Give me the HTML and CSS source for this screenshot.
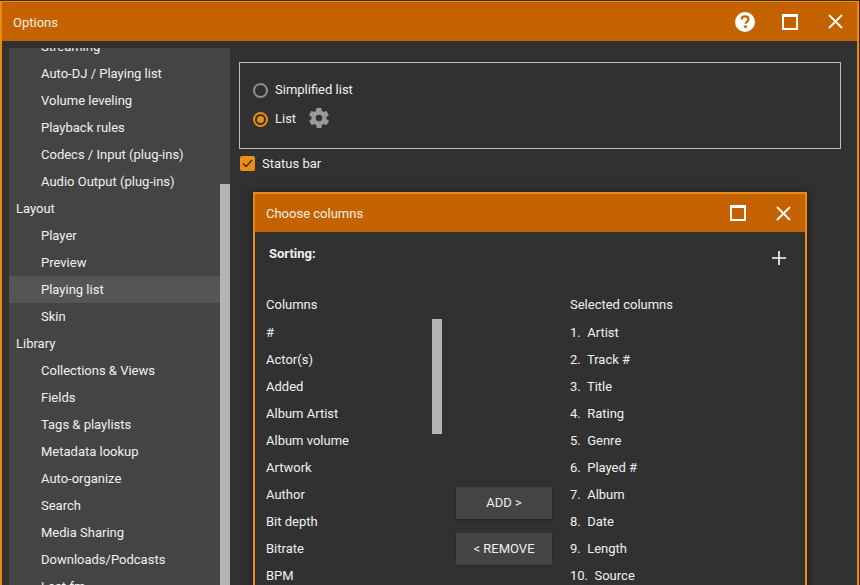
FILE: index.html
```html
<!DOCTYPE html>
<html lang="en">
<head>
<meta charset="utf-8">
<title>Options</title>
<link rel="stylesheet" href="styles.css">
</head>
<body>
<div class="window">
  <header class="titlebar">
    <span class="title">Options</span>
    <div class="win-buttons">
      <svg class="ic-help" width="22" height="22" viewBox="0 0 22 22"><circle cx="11" cy="11" r="10" fill="#fff"/><path d="M7.6 8.600c0-2 1.500-3.300 3.500-3.300s3.400 1.200 3.400 2.900c0 2.400-2.800 2.500-2.800 4.600" fill="none" stroke="#c46200" stroke-width="2.200"/><rect x="10.200" y="14.400" width="2.600" height="2.600" fill="#c46200"/></svg>
      <svg class="ic-max" width="16" height="16" viewBox="0 0 16 16"><rect x="1" y="1" width="14" height="14" fill="none" stroke="#fff" stroke-width="2"/><rect x="0" y="0" width="16" height="3" fill="#fff"/></svg>
      <svg class="ic-close" width="15" height="15" viewBox="0 0 15 15"><path d="M1 1l13 13M14 1L1 14" stroke="#fff" stroke-width="1.800" fill="none"/></svg>
    </div>
  </header>
  <div class="content">
    <nav class="sidebar">
      <div class="nav-scroll">
        <ul class="nav-list">
          <li class="sub">Streaming</li>
          <li class="sub">Auto-DJ / Playing list</li>
          <li class="sub">Volume leveling</li>
          <li class="sub">Playback rules</li>
          <li class="sub">Codecs / Input (plug-ins)</li>
          <li class="sub">Audio Output (plug-ins)</li>
          <li class="head">Layout</li>
          <li class="sub">Player</li>
          <li class="sub">Preview</li>
          <li class="sub active">Playing list</li>
          <li class="sub">Skin</li>
          <li class="head">Library</li>
          <li class="sub">Collections &amp; Views</li>
          <li class="sub">Fields</li>
          <li class="sub">Tags &amp; playlists</li>
          <li class="sub">Metadata lookup</li>
          <li class="sub">Auto-organize</li>
          <li class="sub">Search</li>
          <li class="sub">Media Sharing</li>
          <li class="sub">Downloads/Podcasts</li>
          <li class="sub">Last.fm</li>
        </ul>
      </div>
      <div class="nav-track"><div class="nav-thumb"></div></div>
    </nav>
    <main class="main">
      <section class="group">
        <label class="radio-row"><span class="radio"></span><span class="radio-label">Simplified list</span></label>
        <label class="radio-row"><span class="radio on"></span><span class="radio-label">List</span>
          <svg class="gear" width="24" height="24" viewBox="0 0 24 24"><path fill="#9a9a9a" fill-rule="evenodd" d="M19.400 13c.1-.3.1-.7.1-1s0-.7-.1-1l2.100-1.600c.2-.2.2-.4.1-.6l-2-3.500c-.1-.2-.4-.3-.6-.2l-2.500 1c-.5-.4-1.100-.7-1.700-1l-.4-2.600c0-.3-.2-.5-.5-.5h-4c-.3 0-.5.2-.5.5l-.4 2.600c-.6.3-1.200.6-1.700 1l-2.500-1c-.2-.1-.5 0-.6.2l-2 3.500c-.1.2-.1.4.1.6L4.600 11c-.1.3-.1.700-.1 1s0 .7.1 1l-2.100 1.600c-.2.2-.2.4-.1.6l2 3.500c.1.2.4.3.6.2l2.500-1c.5.4 1.100.7 1.700 1l.4 2.600c0 .3.2.5.5.5h4c.3 0 .5-.2.5-.5l.4-2.600c.6-.3 1.200-.6 1.700-1l2.500 1c.2.1.5 0 .6-.2l2-3.500c.1-.2.1-.4-.1-.6L19.400 13zM12 15.200a3.200 3.200 0 1 1 0-6.400 3.200 3.200 0 0 1 0 6.400z"/></svg>
        </label>
      </section>
      <label class="check-row">
        <span class="check"><svg width="11" height="9" viewBox="0 0 11 9"><path d="M1 4.500l3 3 6-6.500" fill="none" stroke="#2b2b2b" stroke-width="1.400"/></svg></span>Status bar
      </label>
      <section class="dialog">
        <header class="dialog-bar">
          <span class="dialog-title">Choose columns</span>
          <div class="dialog-buttons">
            <svg width="16" height="16" viewBox="0 0 16 16"><rect x="1" y="1" width="14" height="14" fill="none" stroke="#fff" stroke-width="2"/><rect x="0" y="0" width="16" height="3" fill="#fff"/></svg>
            <svg width="15" height="15" viewBox="0 0 15 15"><path d="M1 1l13 13M14 1L1 14" stroke="#fff" stroke-width="1.800" fill="none"/></svg>
          </div>
        </header>
        <div class="sorting">
          <strong>Sorting:</strong>
          <svg class="plus" width="14" height="14" viewBox="0 0 14 14"><path d="M7 0v14M0 7h14" stroke="#fff" stroke-width="1.600"/></svg>
        </div>
        <div class="columns">
          <div class="col col-left">
            <div class="col-head">Columns</div>
            <div class="col-list-wrap">
              <ul class="col-list">
                <li>#</li><li>Actor(s)</li><li>Added</li><li>Album Artist</li><li>Album volume</li><li>Artwork</li><li>Author</li><li>Bit depth</li><li>Bitrate</li><li>BPM</li>
              </ul>
              <div class="col-thumb"></div>
            </div>
          </div>
          <div class="col-actions">
            <button class="btn">ADD &gt;</button>
            <button class="btn">&lt; REMOVE</button>
          </div>
          <div class="col col-right">
            <div class="col-head">Selected columns</div>
            <ul class="col-list">
              <li>1.&nbsp; Artist</li><li>2.&nbsp; Track #</li><li>3.&nbsp; Title</li><li>4.&nbsp; Rating</li><li>5.&nbsp; Genre</li><li>6.&nbsp; Played #</li><li>7.&nbsp; Album</li><li>8.&nbsp; Date</li><li>9.&nbsp; Length</li><li>10.&nbsp; Source</li>
            </ul>
          </div>
        </div>
      </section>
    </main>
  </div>
</div>
</body>
</html>
```
FILE: styles.css
```css
* { box-sizing: border-box; }
html, body { margin: 0; padding: 0; height: 100%; overflow: hidden; }
body {
  background: #3a2d1c;
  font-family: Roboto, "Liberation Sans", sans-serif;
  font-size: 13px;
  color: #f0f0f0;
  padding-top: 1px;
}
ul { list-style: none; margin: 0; padding: 0; }

.window {
  width: 859px;
  height: 590px;
  overflow: hidden;
  border: 2px solid #e88a14;
  border-width: 1px 2px 0 2px;
  background: #313131;
  display: flex;
  flex-direction: column;
}
.titlebar {
  height: 39px;
  flex: none;
  background: #c46200;
  display: flex;
  align-items: center;
  justify-content: space-between;
  padding: 1px 0 0 11px;
}
.title { font-size: 13px; color: #f6eee4; }
.win-buttons { display: flex; align-items: center; margin: -1px 14px 0 0; }
.ic-help { margin-right: 26px; }
.ic-max { margin-right: 30px; }

.content { flex: 1; display: flex; min-height: 0; }

.sidebar {
  width: 221px;
  margin: 7px 0 0 7px;
  flex: none;
  background: #444;
  display: flex;
  height: 537px;
  overflow: hidden;
}
.nav-scroll { flex: 1; overflow: hidden; }
.nav-list { margin-top: -15px; }
.nav-list li { height: 27px; line-height: 27px; white-space: nowrap; color: #f0f0f0; }
.nav-list .sub { padding-left: 32px; }
.nav-list .head { padding-left: 7px; }
.nav-list .active { background: #555; }
.nav-track { width: 10px; flex: none; padding-top: 136px; }
.nav-thumb { height: 420px; background: #b5b5b5; }

.main { margin-left: 9px; width: 602px; flex: none; padding-top: 21px; }

.group {
  height: 87px;
  border: 1px solid #bdbdbd;
  padding: 13px 0 0 13px;
}
.radio-row { height: 29px; display: flex; align-items: center; color: #f0f0f0; }
.radio {
  width: 15px; height: 15px;
  border: 2px solid #8f8f8f;
  border-radius: 50%;
  margin-right: 7px;
  flex: none;
}
.radio-label { margin-bottom: 2px; }
.radio.on { border-color: #f08c12; position: relative; }
.radio.on::after {
  content: "";
  position: absolute;
  left: 2px; top: 2px;
  width: 7px; height: 7px;
  border-radius: 50%;
  background: #f08c12;
}
.gear { margin: 0 0 3px 11px; }

.check-row { display: flex; align-items: center; height: 28px; margin-left: 1px; }
.check {
  width: 15px; height: 15px;
  background: #f08c12;
  border-radius: 2px;
  margin-right: 7px;
  display: flex;
  align-items: center;
  justify-content: center;
}

.dialog {
  margin: 15px 0 0 14px;
  width: 554px;
  height: 420px;
  border: 2px solid #e88a14;
  background: #313131;
  box-shadow: 0 0 8px rgba(0,0,0,.45);
}
.dialog-bar {
  height: 38px;
  background: #c46200;
  display: flex;
  align-items: center;
  justify-content: space-between;
  padding: 0 14px 0 11px;
}
.dialog-title { color: #f6eee4; }
.dialog-buttons { display: flex; align-items: center; gap: 30px; }

.sorting {
  height: 64px;
  display: flex;
  justify-content: space-between;
  padding: 13px 19px 0 14px;
  line-height: 17px;
}
.sorting strong { font-weight: 700; }
.plus { margin-top: 6px; }

.columns { display: flex; }
.col-left { width: 190px; padding-left: 11px; flex: none; }
.col-head { height: 17px; line-height: 17px; margin-bottom: 6px; }
.col-list li { height: 27px; line-height: 27px; white-space: nowrap; }
.col-list-wrap { position: relative; }
.col-thumb {
  position: absolute;
  left: 166px; top: 0;
  width: 10px; height: 115px;
  background: #b5b5b5;
}
.col-actions {
  width: 125px;
  flex: none;
  padding: 191px 0 0 11px;
  display: flex;
  flex-direction: column;
  gap: 14px;
}
.btn {
  width: 96px;
  height: 32px;
  border: none;
  padding: 0 0 2px;
  background: #444;
  color: #f0f0f0;
  font: 13px Roboto, "Liberation Sans", sans-serif;
  box-shadow: 0 1px 2px rgba(0,0,0,.3);
}
.col-right { flex: 1; }
```
